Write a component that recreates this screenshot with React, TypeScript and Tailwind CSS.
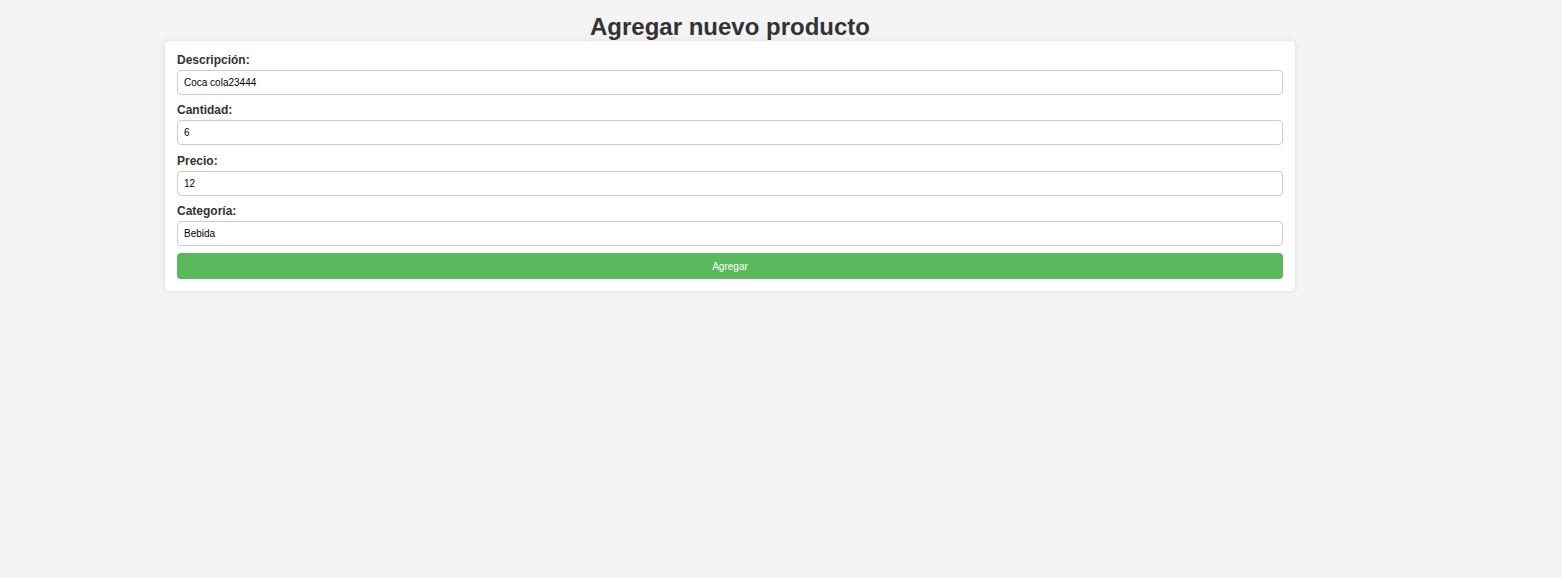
import React, { useState } from "react";

// Form fields shown in the card
const fields = [
  { key: "descripcion", label: "Descripción:", value: "Coca cola23444" },
  { key: "cantidad", label: "Cantidad:", value: "6" },
  { key: "precio", label: "Precio:", value: "12" },
  { key: "categoria", label: "Categoría:", value: "Bebida" },
];

export default function App() {
  const [values, setValues] = useState<Record<string, string>>(
    Object.fromEntries(fields.map((f) => [f.key, f.value]))
  );

  return (
    <div className="min-h-[578px] w-full bg-[#f4f4f4] font-['Liberation_Sans',Arial,sans-serif]">
      <div className="w-[1460px]">
        {/* Title */}
        <h1 className="pt-[13px] text-center text-[24px] font-bold leading-[28px] text-[#333]">
          Agregar nuevo producto
        </h1>

        {/* Card */}
        <form
          className="mx-auto w-[1130px] rounded-[5px] bg-white p-[12px] shadow-[0_0_6px_rgba(0,0,0,0.1)]"
          onSubmit={(e) => e.preventDefault()}
        >
          <div className="flex flex-col gap-[8.4px]">
            {fields.map((f) => (
              <div key={f.key}>
                <label
                  htmlFor={f.key}
                  className="mb-[3px] block text-[12px] font-bold leading-[14px] text-[#333]"
                >
                  {f.label}
                </label>
                <input
                  id={f.key}
                  type="text"
                  value={values[f.key]}
                  onChange={(e) => setValues({ ...values, [f.key]: e.target.value })}
                  className="block h-[25px] w-full rounded-[4px] border border-[#ccc] px-[6px] text-[10px] text-black outline-none"
                />
              </div>
            ))}
          </div>

          <button
            type="submit"
            className="mt-[7px] block h-[26px] w-full rounded-[4px] bg-[#5cb85c] text-[10px] text-white"
          >
            Agregar
          </button>
        </form>
      </div>
    </div>
  );
}
